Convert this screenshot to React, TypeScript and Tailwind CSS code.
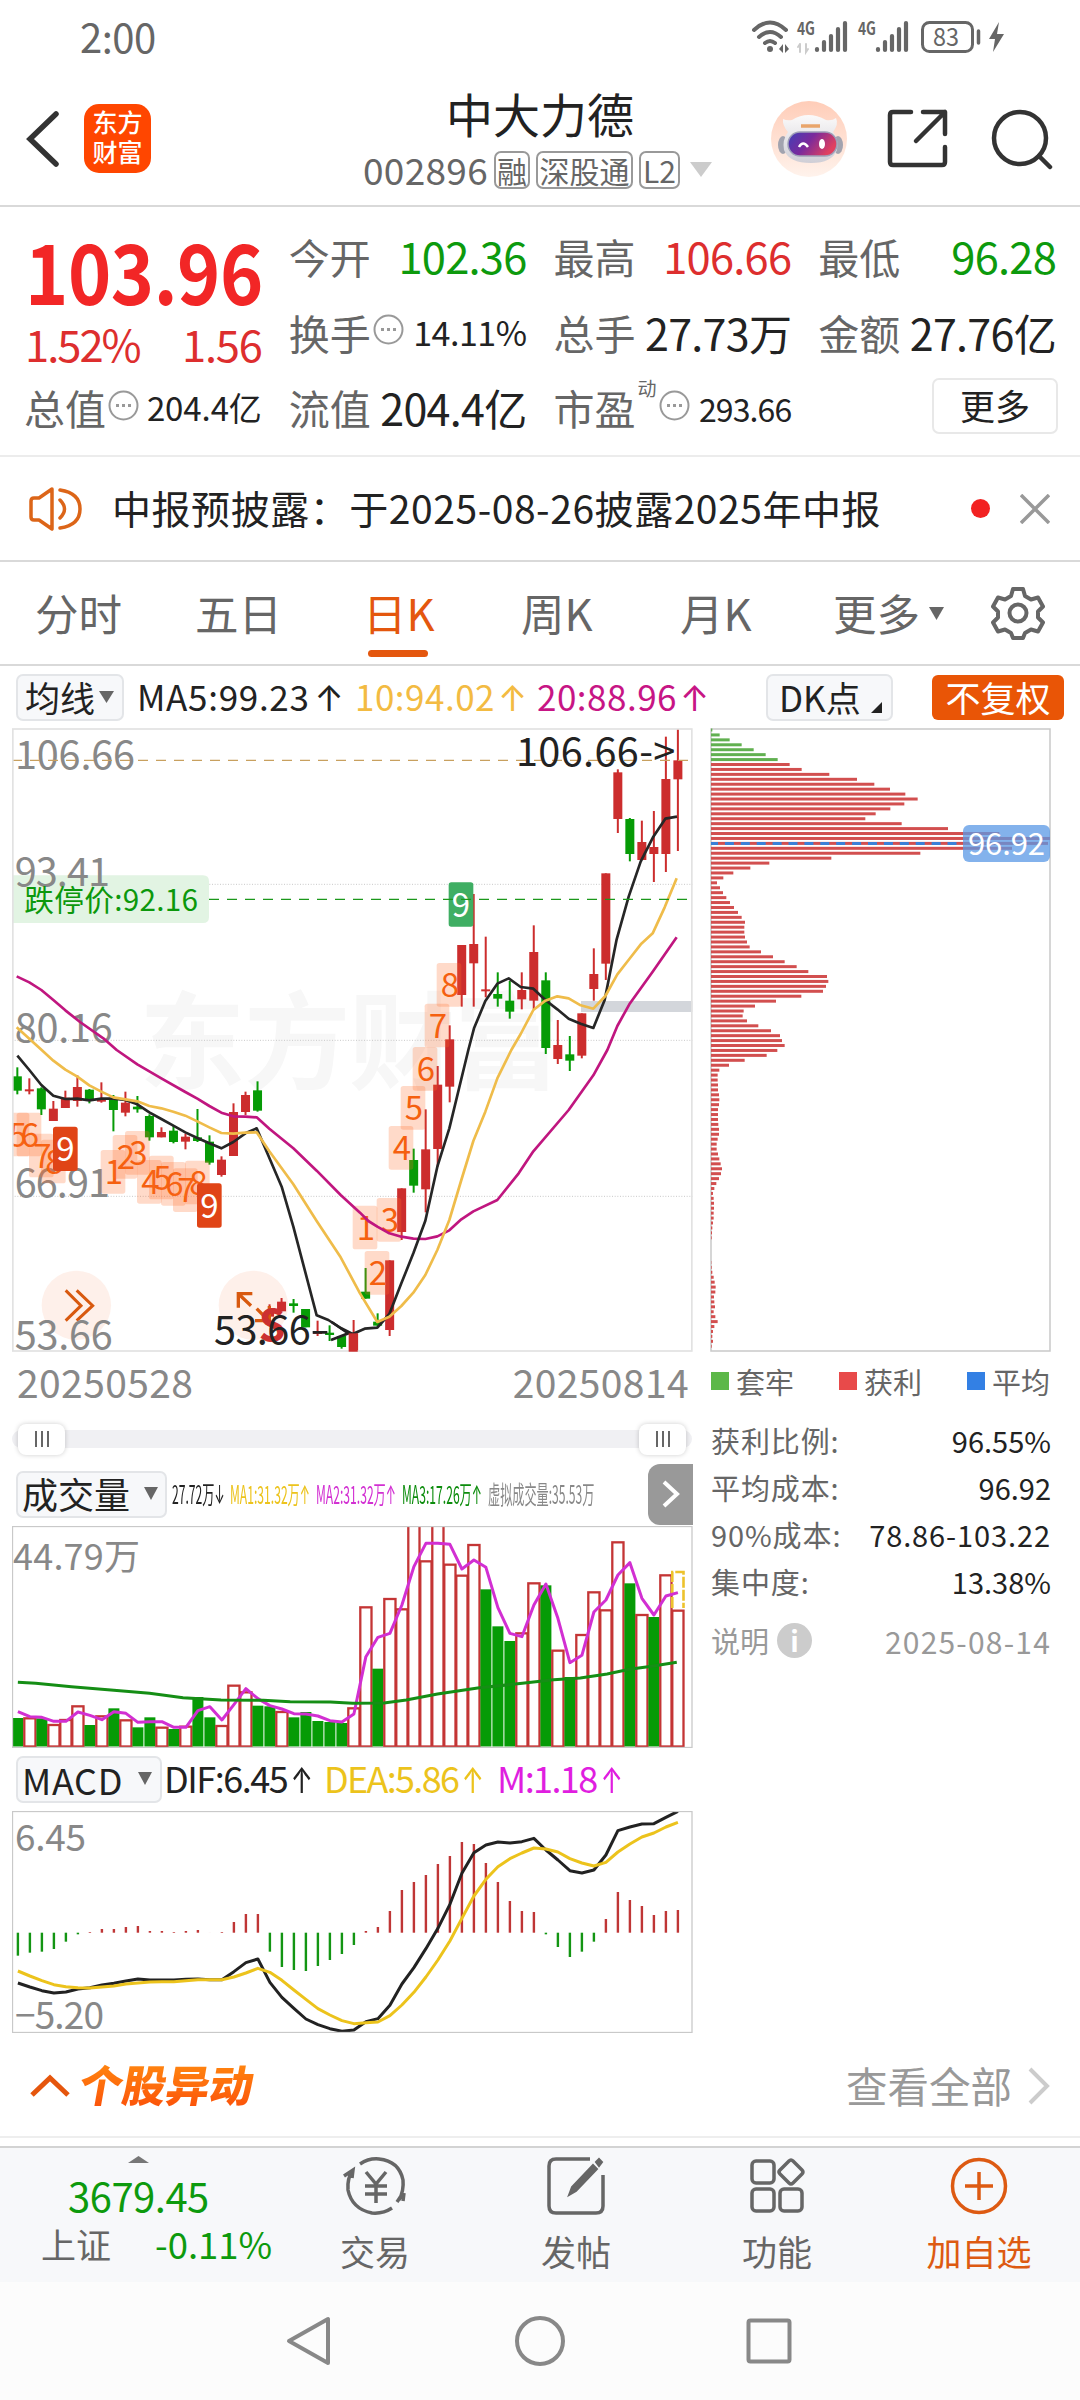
/**
 * @file App.tsx
 * @description Stock detail screen (daily K line).
 *
 * The page is a single column:
 * - **Header**: status bar, title bar, quote grid and notice line.
 * - **Charts**: candles, volume and MACD on the left, chip distribution on the right.
 * - **Footer**: index ticker, action tabs and the system navigation keys.
 */
import type { ReactNode } from 'react';

const R = '#cc2d2d';
const G = '#069b06';

// [direction, body top, body bottom, wick top, wick bottom], in chart units
type Candle = ['r' | 'g', number, number, number, number];

const CANDLES: Candle[] = [
  ['g', 1069, 1112, 1042, 1123], ['r', 1108, 1114, 1075, 1123], ['g', 1105, 1168, 1102, 1185], ['r', 1166, 1203, 1143, 1203],
  ['r', 1133, 1164, 1112, 1164], ['r', 1101, 1143, 1066, 1160], ['g', 1109, 1140, 1107, 1150], ['r', 1140, 1145, 1087, 1148],
  ['g', 1140, 1170, 1125, 1234], ['r', 1148, 1178, 1115, 1189], ['g', 1160, 1168, 1128, 1178], ['g', 1188, 1252, 1183, 1262],
  ['r', 1236, 1252, 1222, 1252], ['g', 1232, 1266, 1218, 1270], ['r', 1250, 1265, 1241, 1288], ['g', 1252, 1263, 1167, 1266],
  ['g', 1265, 1328, 1246, 1334], ['r', 1319, 1365, 1309, 1370], ['r', 1176, 1308, 1150, 1308], ['r', 1125, 1176, 1115, 1185],
  ['g', 1111, 1172, 1084, 1175], ['r', 1774, 1790, 1753, 1810], ['r', 1745, 1774, 1734, 1774], ['g', 1750, 1758, 1737, 1778],
  ['g', 1767, 1822, 1767, 1822], ['r', 1837, 1842, 1802, 1848], ['g', 1838, 1845, 1816, 1863], ['g', 1848, 1881, 1845, 1886],
  ['r', 1840, 1895, 1800, 1895], ['g', 1715, 1736, 1644, 1736], ['g', 1805, 1817, 1780, 1820], ['r', 1621, 1830, 1621, 1848],
  ['r', 1405, 1536, 1405, 1560], ['g', 1320, 1397, 1286, 1418], ['r', 1288, 1408, 1168, 1477], ['r', 1094, 1287, 1038, 1340],
  ['r', 958, 1100, 916, 1147], ['r', 675, 825, 675, 860], ['r', 672, 730, 522, 860], ['r', 808, 814, 650, 832],
  ['g', 822, 836, 757, 860], ['g', 842, 875, 783, 896], ['r', 810, 838, 757, 868], ['r', 696, 842, 616, 868],
  ['g', 781, 984, 757, 1002], ['r', 975, 1017, 900, 1032], ['g', 1003, 1022, 948, 1053], ['r', 880, 1007, 880, 1015],
  ['r', 762, 807, 685, 842], ['r', 460, 731, 460, 780], ['r', 157, 297, 148, 339], ['g', 297, 402, 294, 424],
  ['r', 366, 420, 302, 420], ['r', 381, 402, 273, 486], ['r', 177, 402, 50, 456], ['r', 121, 178, 27, 393],
];

const MA5 =
  '52,1007 88,1050 124,1095 160,1127 196,1137 232,1136 268,1141 304,1136 340,1136 376,1140 412,1153 448,1177 484,1197 520,1217 556,1237 592,1254 628,1270 664,1285 700,1266 736,1240 770,1225 845,1400 880,1520 950,1786 985,1800 1022,1824 1058,1842 1094,1826 1132,1823 1168,1782 1204,1690 1240,1600 1276,1502 1312,1340 1348,1225 1405,990 1422,925 1456,843 1492,791 1526,775 1562,801 1600,806 1636,840 1672,868 1706,896 1742,911 1780,924 1814,840 1850,658 1886,530 1922,425 1960,350 1996,296 2031,290';
const MA10 =
  '50,922 125,990 160,1022 196,1049 232,1070 268,1096 304,1115 340,1132 376,1138 412,1144 448,1158 484,1165 520,1175 556,1187 592,1204 628,1222 664,1239 700,1241 736,1238 770,1237 808,1294 880,1393 950,1503 1022,1612 1080,1720 1132,1806 1168,1790 1204,1758 1240,1718 1276,1665 1312,1590 1348,1500 1384,1380 1420,1263 1456,1175 1492,1075 1534,990 1562,942 1600,870 1636,842 1672,829 1706,835 1742,856 1780,866 1816,828 1852,763 1888,717 1924,671 1958,640 1994,562 2030,475';
const MA20 =
  '50,769 88,787 124,810 160,840 196,871 240,906 310,955 350,990 412,1033 484,1075 556,1116 592,1136 628,1158 664,1178 700,1189 736,1190 770,1192 808,1226 880,1285 950,1352 1022,1425 1080,1478 1105,1503 1132,1520 1168,1540 1204,1550 1240,1556 1276,1557 1312,1549 1348,1531 1384,1498 1420,1474 1492,1440 1556,1360 1600,1294 1706,1170 1780,1066 1822,990 1852,918 1888,853 1958,755 2030,652';

// [label, left, top] of the nine-turn markers
const TURNS: [string, number, number][] = [
  ['5', 14, 1178], ['6', 50, 1178], ['7', 87, 1241], ['8', 123, 1259],
  ['1', 302, 1290], ['2', 338, 1245], ['3', 375, 1233], ['4', 411, 1320], ['5', 447, 1307], ['6', 483, 1326], ['7', 519, 1345], ['8', 555, 1322],
  ['1', 1058, 1457], ['2', 1094, 1593], ['3', 1130, 1434], ['4', 1166, 1218], ['5', 1202, 1098], ['6', 1238, 981], ['7', 1274, 851], ['8', 1310, 729],
];

const NINES: [number, number, string][] = [[159, 1220, '#e04416'], [591, 1390, '#e04416'], [1346, 487, '#3fae63']];

const CHIPS = [
  4, 26, 56, 92, 128, 164, 200, 236, 272, 355, 438, 490, 537, 583, 620, 580, 538, 494, 463, 572, 711, 865, 1017, 1011, 903, 628, 361, 175, 118, 67, 37,
  18, 27, 36, 46, 57, 69, 81, 92, 102, 100, 100, 102, 108, 116, 150, 186, 221, 257, 292, 348, 352, 345, 336, 271, 195, 132, 98, 95, 108, 142, 180, 207,
  213, 221, 199, 167, 101, 54, 25, 20, 20, 21, 21, 24, 25, 24, 21, 21, 21, 22, 24, 24, 20, 17, 17, 21, 25, 29, 33, 30, 24, 16, 10, 6, 8, 9, 9, 8, 8, 6,
  4, 3, 2, 0, 0, 0, 0, 1, 2, 4, 8, 11, 14, 13, 9, 10, 12, 8, 13, 20, 10, 6, 4, 6, 2,
];

const VOLUMES =
  'g624 r622 g625 r642 r627 r586 g645 r616 g595 r628 g652 g622 r650 g657 r647 g561 g622 r645 r524 r544 g587 g589 r603 g622 g606 g633 g636 g639 r592 r289 g476 r264 r295 r40 r151 r40 r161 r194 r102 g238 g349 g393 r367 r217 g226 r419 g501 r372 r244 r298 r94 g220 r312 g321 r193 r299'.split(' ');
const VOL_MA = [
  605, 620, 622, 634, 634, 606, 616, 629, 605, 610, 637, 635, 635, 652, 652, 602, 590, 630, 584, 536, 566, 587, 597, 611, 612, 618, 632, 636, 612, 440, 382,
  370, 285, 170, 100, 100, 103, 177, 150, 172, 293, 370, 380, 285, 222, 325, 458, 436, 306, 270, 195, 158, 265, 315, 258, 248,
];
const VOL_MA3: [number, number][] = [
  [40, 517], [80, 520], [160, 530], [255, 541], [335, 550], [410, 563], [495, 570], [590, 571], [650, 575], [740, 576], [790, 580], [860, 579], [910, 570],
  [980, 552], [1070, 534], [1170, 520], [1240, 509], [1300, 504], [1360, 492], [1410, 478], [1460, 469], [1516, 457],
];

const MACD_BARS = [
  617, 608, 605, 597, 575, 553, 546, 537, 537, 531, 528, 543, 543, 546, 543, 540, 548, 546, 516, 492, 492, 605, 651, 660, 663, 648, 630, 612, 585, 543, 531,
  483, 420, 396, 375, 342, 318, 276, 282, 339, 396, 453, 483, 486, 553, 591, 621, 605, 575, 507, 426, 450, 468, 495, 483, 480,
];
const DIF = [
  699, 711, 722, 729, 726, 717, 713, 705, 700, 693, 687, 690, 690, 690, 688, 687, 689, 689, 665, 638, 627, 697, 742, 775, 807, 824, 836, 844, 840, 815, 806,
  766, 702, 653, 596, 535, 463, 370, 308, 285, 276, 279, 275, 265, 300, 330, 362, 369, 360, 315, 242, 231, 222, 221, 202, 184,
];
const DEA = [
  663, 678, 692, 704, 710, 713, 714, 711, 708, 702, 699, 696, 695, 695, 692, 689, 689, 689, 681, 669, 655, 667, 691, 720, 748, 776, 795, 812, 821, 818, 816,
  797, 765, 727, 681, 630, 573, 505, 438, 388, 350, 326, 309, 294, 297, 306, 326, 339, 348, 337, 306, 282, 261, 249, 231, 217,
];

const barX = (i: number) => 17.9 + i * 12;
const line = (values: number[], offset: number) => values.map((v, i) => `${barX(i)},${offset + v / 3}`).join(' ');

const Up = ({ className = '' }: { className?: string }) => <span className={`font-[Inter] ${className}`}>↑</span>;

const Caret = ({ className = '' }: { className?: string }) => (
  <svg className={`shrink-0 ${className}`} viewBox="0 0 10 8" preserveAspectRatio="none" fill="currentColor">
    <path d="M0 0h10L5 8z" />
  </svg>
);

const Dots = () => (
  <svg className="h-[31px] w-[31px] shrink-0" viewBox="0 0 31 31" fill="none" stroke="#999" strokeWidth="2">
    <circle cx="15.5" cy="15.5" r="14" />
    <path d="M8 15.5h3m3 0h3m3 0h3" strokeWidth="3" />
  </svg>
);

function StatusBar() {
  return (
    <div className="flex h-[72px] items-center pl-[80px] text-[#666]">
      <span className="w-[671px] text-[40px] tracking-[-0.500px]">2:00</span>
      <svg className="h-[44px] w-[256px]" viewBox="750 14 256 44" fill="none" stroke="#666" strokeLinecap="round">
        <g strokeWidth="4">
          <path d="M753 30q16-15 32 0M758 37q11-10 22 0M764 43q5-4 10 0" />
        </g>
        <circle cx="769" cy="49" r="3" fill="#666" stroke="none" />
        <path d="M778 49l4-5v9zM788 49l-4-5v9z" fill="#666" stroke="none" />
        <path d="M799 44v8M797 47l2-3M805 44v8l2-3" stroke="#ccc" strokeWidth="2" />
        <text x="796" y="35" fontSize="18" fontWeight="700" fill="#666" stroke="none" textLength="18" lengthAdjust="spacingAndGlyphs">4G</text>
        <path d="M816 49v1M823 42v8M830 36v14M837 29v21M844 23v27" strokeWidth="4.2" />
        <text x="857" y="35" fontSize="18" fontWeight="700" fill="#666" stroke="none" textLength="18" lengthAdjust="spacingAndGlyphs">4G</text>
        <path d="M877 49v1M884 42v8M891 36v14M898 29v21M905 23v27" strokeWidth="4.2" />
        <rect x="921.5" y="22.5" width="50" height="29" rx="7" strokeWidth="3" />
        <path d="M977.500 31v12" strokeWidth="3.500" />
        <text x="932" y="46" fontSize="25" fill="#666" stroke="none" textLength="26" lengthAdjust="spacingAndGlyphs">83</text>
        <path d="M998 22l-10 17h6l-2 13 11-18h-7z" fill="#666" stroke="none" />
      </svg>
    </div>
  );
}

function TitleBar() {
  const tag = 'flex h-[38px] items-center justify-center rounded-[7px] border-2 border-[#999] text-[30px]';
  return (
    <header className="flex h-[135px] items-center border-b-2 border-[#d9d9d9] text-[#666]">
      <svg className="ml-[26px] h-[56px] w-[34px]" viewBox="0 0 34 56" fill="none" stroke="#333" strokeWidth="5.500" strokeLinecap="round">
        <path d="M30 3L4 28l26 25" />
      </svg>
      <div className="ml-[24px] flex h-[69px] w-[67px] flex-col items-center justify-center gap-[5px] rounded-[15px] bg-[#ff4600] pb-[4px] text-[25px] font-medium text-white">
        <span>东方</span>
        <span>财富</span>
      </div>
      <div className="ml-[212px] flex w-[351px] flex-col">
        <h1 className="ml-[83px] text-[47px] text-[#222]">中大力德</h1>
        <div className="mt-[15px] flex items-center">
          <span className="w-[131px] text-[37px] tracking-[0.300px]">002896</span>
          <span className={`${tag} w-[36px]`}>融</span>
          <span className={`${tag} ml-[6px] w-[97px]`}>深股通</span>
          <span className={`${tag} ml-[6px] w-[41px]`}>L2</span>
          <Caret className="ml-[10px] h-[15px] w-[22px] text-[#ccc]" />
        </div>
      </div>
      <svg className="ml-[57px] h-[76px] w-[76px]" viewBox="0 0 76 76">
        <defs>
          <linearGradient id="halo" x1="0" y1="0" x2="0" y2="1">
            <stop offset="0" stopColor="#ffcdb8" />
            <stop offset="1" stopColor="#fff3ec" />
          </linearGradient>
          <linearGradient id="shell" x1="0" y1="0" x2="0" y2="1">
            <stop offset="0" stopColor="#fbfafa" />
            <stop offset="1" stopColor="#cfced6" />
          </linearGradient>
          <linearGradient id="visor" x1="0" y1="0" x2="1" y2="0.4">
            <stop offset="0" stopColor="#4040b8" />
            <stop offset="0.5" stopColor="#7a2a9c" />
            <stop offset="1" stopColor="#e04060" />
          </linearGradient>
        </defs>
        <circle cx="38" cy="38" r="38" fill="url(#halo)" />
        <ellipse cx="12" cy="44" rx="5" ry="9" fill="#a2a3af" />
        <ellipse cx="67" cy="44" rx="5" ry="9" fill="#a2a3af" />
        <path d="M12 18q4 2 9 1 16-10 34 0 6 1 10-2 3 6-3 14 6 8 4 18-5 13-26 13-22 0-27-13-2-10 4-18-6-7-5-13z" fill="url(#shell)" />
        <rect x="17" y="31" width="49" height="24" rx="12" fill="url(#visor)" stroke="#9fa0b8" strokeWidth="1.500" />
        <path d="M28 46q4-7 9 0" fill="none" stroke="#fff" strokeWidth="2.500" />
        <ellipse cx="51" cy="43" rx="3" ry="5" fill="#fff" />
        <path d="M30 25h19" stroke="#e9a56b" strokeWidth="3.500" />
      </svg>
      <svg className="ml-[40px] h-[62px] w-[62px]" viewBox="0 0 62 62" fill="none" stroke="#333" strokeWidth="4.500" strokeLinecap="round" strokeLinejoin="round">
        <path d="M24 4H6q-3 0-3 3v47q0 3 3 3h49q3 0 3-3V39M36 4h22v22M58 4L29 33" />
      </svg>
      <svg className="ml-[42px] h-[62px] w-[64px]" viewBox="0 0 64 62" fill="none" stroke="#333" strokeWidth="4.500" strokeLinecap="round">
        <circle cx="29" cy="30" r="26" />
        <path d="M48 48l11 11" />
      </svg>
    </header>
  );
}

function Cell({ label, children, mark }: { label: string; children: ReactNode; mark?: ReactNode }) {
  return (
    <div className="flex items-center justify-between">
      <div className="flex items-center text-[41px] text-[#666]">
        {label}
        {mark}
      </div>
      {children}
    </div>
  );
}

function Quote() {
  const num = 'text-[43.5px] tracking-[-0.8px]';
  const mid = 'text-[43px] tracking-[-0.7px] text-[#222]';
  return (
    <section className="grid h-[250px] grid-cols-4 grid-rows-[76px_76px_75px] gap-x-[27px] border-b-2 border-[#ececec] pt-[11px] pr-[24px] pl-[24px]">
      <div className="row-span-2 flex flex-col text-[#dd2e2e]">
        <span className="mt-[4px] ml-[1px] h-[95px] w-[230px] origin-left scale-x-[0.885] text-[83px] leading-[95px] font-bold tracking-[-0.500px] text-[#f22626]">103.96</span>
        <span className="mt-[5px] ml-[1px] flex justify-between text-[43.5px] tracking-[-2px]">
          <span>1.52%</span>
          <span className="tracking-[-1.200px]">1.56</span>
        </span>
      </div>
      <Cell label="今开"><span className={`${num} text-[#0d9a0d]`}>102.36</span></Cell>
      <Cell label="最高"><span className={`${num} text-[#dd2e2e]`}>106.66</span></Cell>
      <Cell label="最低"><span className={`${num} text-[#0d9a0d]`}>96.28</span></Cell>
      <Cell label="换手" mark={<span className="ml-[2px] -mt-[5px]"><Dots /></span>}>
        <span className="text-[34px] tracking-[-0.500px] text-[#222]">14.11%</span>
      </Cell>
      <Cell label="总手"><span className={mid}>27.73万</span></Cell>
      <Cell label="金额"><span className={mid}>27.76亿</span></Cell>
      <Cell label="总值" mark={<span className="ml-[2px] -mt-[5px]"><Dots /></span>}>
        <span className="text-[33px] tracking-[-0.100px] text-[#222]">204.4亿</span>
      </Cell>
      <Cell label="流值"><span className={mid}>204.4亿</span></Cell>
      <Cell
        label="市盈"
        mark={
          <span className="-mt-[5px] flex">
            <span className="-mt-[12px] ml-[2px] text-[19px]">动</span>
            <span className="ml-[2px]"><Dots /></span>
          </span>
        }
      >
        <span className="text-[32px] tracking-[-0.900px] text-[#222]">293.66</span>
      </Cell>
      <button className="-mt-[4px] mr-[-2px] flex h-[56px] w-[126px] items-center justify-center self-center justify-self-end rounded-[7px] border-2 border-[#e8e8e8] pb-[3px] text-[35px] text-[#222]">更多</button>
    </section>
  );
}

function Notice() {
  return (
    <div className="flex h-[105px] items-center border-b-2 border-[#d9d9d9] pl-[29px] text-[39px]">
      <svg className="h-[46px] w-[53px]" viewBox="0 0 53 46" fill="none" stroke="#dc6518" strokeWidth="3.500" strokeLinejoin="round" strokeLinecap="round">
        <path d="M23 3L10 12H5q-3 0-3 3v16q0 3 3 3h5l13 9zM31 14q9 9 0 18M31 4q20 3 20 19T31 42" />
      </svg>
      <span className="ml-[30px] w-[859px] pb-[2px] tracking-[0.550px] text-[#222]">中报预披露：于2025-08-26披露2025年中报</span>
      <span className="h-[19px] w-[19px] rounded-full bg-[#f22222]" />
      <svg className="ml-[30px] h-[30px] w-[30px]" viewBox="0 0 30 30" stroke="#999" strokeWidth="3.500">
        <path d="M1 1l28 28M29 1L1 29" />
      </svg>
    </div>
  );
}

function Tabs() {
  return (
    <nav className="flex h-[104px] items-center border-b-2 border-[#d9d9d9] pl-[35px] text-[43.5px] text-[#666]">
      <span className="w-[160px]">分时</span>
      <span className="w-[168px]">五日</span>
      <span className="relative w-[158px] text-[#e4570e]">
        日K
        <i className="absolute top-[59px] left-[5px] h-[7px] w-[60px] rounded-full bg-[#e4570e]" />
      </span>
      <span className="w-[159px]">周K</span>
      <span className="w-[153px]">月K</span>
      <span>更多</span>
      <Caret className="ml-[9px] h-[13px] w-[15px]" />
      <svg className="ml-[47px] h-[54px] w-[54px]" viewBox="0 0 54 54" fill="none" stroke="#666" strokeWidth="4" strokeLinejoin="round">
        <path d="M22 3h10l2 7 6 3.500 7-2 5 9-5 5v6l5 5-5 9-7-2-6 3.500-2 5H22l-2-5-6-3.500-7 2-5-9 5-5v-6l-5-5 5-9 7 2 6-3.500z" />
        <circle cx="27" cy="27" r="8.500" />
      </svg>
    </nav>
  );
}

function MaBar() {
  return (
    <div className="flex h-[62px] items-center pt-[1px] pl-[16px] text-[35px] text-[#222]">
      <span className="flex h-[47px] w-[108px] items-center rounded-[7px] border-2 border-[#e3e5e8] bg-[#f7f8fa] pb-[2px] pl-[7px]">
        均线
        <Caret className="ml-[4px] h-[12px] w-[15px] text-[#666]" />
      </span>
      <span className="ml-[13px] w-[218px] pb-[2px] tracking-[0.700px]">MA5:99.23<Up className="ml-[5px]" /></span>
      <span className="w-[182px] pb-[2px] tracking-[0.500px] text-[#f3bb42]">10:94.02<Up className="ml-[3px]" /></span>
      <span className="w-[229px] pb-[2px] tracking-[0.500px] text-[#c71585]">20:88.96<Up className="ml-[3px]" /></span>
      <span className="flex h-[47px] w-[127px] items-center rounded-[7px] border-2 border-[#e3e5e8] bg-[#f7f8fa] pb-[2px] pl-[11px]">
        DK点
        <svg className="mt-[22px] ml-[10px] h-[11px] w-[11px]" viewBox="0 0 10 10"><path d="M10 0v10H0z" fill="#222" /></svg>
      </span>
      <span className="ml-[39px] flex h-[45px] w-[132px] items-center justify-center rounded-[6px] bg-[#e95506] pb-[2px] text-white">不复权</span>
    </div>
  );
}

// Units are a third of a pixel
function PriceChart() {
  return (
    <svg className="h-[624px] w-[681px]" viewBox="36 24 2043 1872">
      <text x="418" y="1083" fontSize="318" fontWeight="700" fill="#f7f7f7" textLength="1262">东方财富</text>
      <path d="M36 493H2077M36 961H2077M36 1429H2077" stroke="#c8c8c8" strokeWidth="3" strokeDasharray="3 5" />
      <rect x="1743" y="843" width="334" height="33" fill="#d3d6db" />
      <path d="M36 466H609q18 0 18 18V591q0 18-18 18H36z" fill="#e2f4e3" />
      <g fill="#888" fontSize="119">
        <text x="45" y="147" textLength="360">106.66</text>
        <text x="44" y="498" textLength="286">93.41</text>
        <text x="44" y="966" textLength="294">80.16</text>
        <text x="44" y="1430" textLength="286">66.91</text>
      </g>
      <text x="73" y="572" fontSize="89" fill="#0c980c" textLength="521">跌停价:92.16</text>
      <circle cx="229" cy="1756" r="104" fill="#fef0ea" />
      <circle cx="760" cy="1756" r="104" fill="#fef0ea" />
      {CANDLES.map(([dir, top, bottom, high, low], i) => (
        <g key={i} fill={dir === 'r' ? R : G}>
          <rect x={49 + i * 36.03} y={high} width="6" height={low - high} />
          <rect x={38.5 + i * 36.03} y={top} width="27" height={bottom - top} />
        </g>
      ))}
      {TURNS.map(([label, x, y], i) => (
        <g key={i}>
          <rect x={x} y={y} width="74" height="131" rx="8" fill="#ff6a28" fillOpacity="0.25" />
          <text x={x + 40} y={y + 102} fontSize="99" fill="#f5600f" textAnchor="middle">{label}</text>
        </g>
      ))}
      <g fill="none" strokeLinejoin="round" strokeWidth="8">
        <polyline points={MA20} stroke="#c0167f" />
        <polyline points={MA5} stroke="#262626" />
        <polyline points={MA10} stroke="#efbc4a" />
      </g>
      {NINES.map(([x, y, fill]) => (
        <g key={x}>
          <rect x={x} y={y} width="74" height="133" rx="8" fill={fill} />
          <text x={x + 37} y={y + 103} fontSize="99" fill="#fff" textAnchor="middle">9</text>
        </g>
      ))}
      <path d="M36 121H2065" stroke="#c8a05f" strokeWidth="4" strokeDasharray="30 24" />
      <path d="M627 538H2065" stroke="#1b981b" strokeWidth="4" strokeDasharray="30 24" />
      <text x="1548" y="137" fontSize="119" fill="#222" textLength="478">106.66-&gt;</text>
      <g fill="none" stroke="#d8590f" strokeWidth="9">
        <path d="M197 1711l46 46-46 45M230 1711l48 46-48 45" />
        <path d="M757 1721H715v42M715 1721l38 36M770 1766l37 37M765 1802h43v-44" strokeWidth="10" />
      </g>
      <text x="776" y="1864" fontSize="128" fontWeight="700" fill="#cc3030">S</text>
      <text x="44" y="1886" fontSize="119" fill="#888" textLength="294">53.66</text>
      <text x="642" y="1872" fontSize="119" fill="#222" textLength="290">53.66</text>
      <path d="M938 1837h44M995 1806l50 34-52 20" stroke="#222" strokeWidth="8" fill="none" />
      <rect x="38.500" y="27" width="2037" height="1866" fill="none" stroke="#e2e2e2" strokeWidth="5" />
      <rect x="1046" y="1840" width="27" height="55" fill={R} />
    </svg>
  );
}

function ChipChart() {
  return (
    <svg className="h-[624px] w-[342px]" viewBox="710 728 342 624">
      <rect x="711" y="729" width="339" height="622" fill="none" stroke="#c9c9c9" strokeWidth="1.500" />
      {CHIPS.map((w, i) => (
        <rect key={i} x="711" y={728.5 + i * 4.93} width={w / 3} height="3" fill={i < 7 ? '#61b050' : '#d24f4f'} />
      ))}
      <path d="M711 843.4H963" stroke="#3a80d8" strokeWidth="3" strokeDasharray="9 6.900" strokeDashoffset="2" />
      <rect x="963" y="825" width="87" height="37" rx="6" fill="#5a98e6" fillOpacity="0.75" />
      <text x="968" y="855" fontSize="31" fill="#fff" textLength="77">96.92</text>
    </svg>
  );
}

function VolumeChart() {
  return (
    <svg className="h-[222px] w-[681px]" viewBox="12 1526 681 222">
      <text x="13" y="1570" fontSize="36" fill="#888" textLength="127">44.79万</text>
      {VOLUMES.map((item, i) => {
        const top = 1510 + Number(item.slice(1)) / 3;
        return item[0] === 'g' ? (
          <rect key={i} x={barX(i) - 5.5} y={top} width="11" height={1746.5 - top} fill={G} />
        ) : (
          <rect key={i} x={barX(i) - 5.6} y={top + 1} width="11.200" height={1745.5 - top} fill="#fff" stroke="#c43535" strokeWidth="2.300" />
        );
      })}
      <path d="M672.300 1608V1572H683.500V1608" fill="none" stroke="#edc22c" strokeWidth="2.600" strokeDasharray="11 2" />
      <polyline points={line(VOL_MA, 1510)} fill="none" stroke="#d22fd2" strokeWidth="3" strokeLinejoin="round" />
      <polyline points={VOL_MA3.map(([x, y]) => `${x / 2.24},${1510 + y / 3}`).join(' ')} fill="none" stroke="#158e15" strokeWidth="3" />
      <rect x="12.500" y="1526.500" width="679.500" height="221" fill="none" stroke="#c9c9c9" strokeWidth="1.300" />
    </svg>
  );
}

function MacdChart() {
  const zero = 1932.7;
  return (
    <svg className="h-[222px] w-[681px]" viewBox="12 1811 681 222">
      <text x="15" y="1851" fontSize="37" fill="#888" textLength="71">6.45</text>
      <text x="15" y="2029" fontSize="37" fill="#888" textLength="89">−5.20</text>
      {MACD_BARS.map((v, i) => {
        const tip = 1750 + v / 3;
        return <rect key={i} x={barX(i) - 1.2} y={Math.min(tip, zero)} width="2.400" height={Math.abs(tip - zero)} fill={v > 548 ? '#139513' : '#bf3636'} />;
      })}
      <polyline points={line(DIF, 1750)} fill="none" stroke="#222" strokeWidth="3" strokeLinejoin="round" />
      <polyline points={line(DEA, 1750)} fill="none" stroke="#ecc31c" strokeWidth="3" strokeLinejoin="round" />
      <rect x="12.500" y="1811.500" width="679.500" height="221" fill="none" stroke="#c9c9c9" strokeWidth="1.300" />
    </svg>
  );
}

const Handle = () => (
  <span className="flex h-[31px] w-[47px] items-center justify-center gap-[4px] rounded-[8px] bg-white shadow-[0_0_5px_rgba(0,0,0,0.2)]">
    <i className="h-[16px] w-[2px] bg-[#666]" />
    <i className="h-[16px] w-[2px] bg-[#666]" />
    <i className="h-[16px] w-[2px] bg-[#666]" />
  </span>
);

function Squeezed({ className, children }: { className: string; children: ReactNode }) {
  return (
    <span className={`shrink-0 ${className}`}>
      <span className="inline-block origin-left scale-x-[0.485]">{children}</span>
    </span>
  );
}

function Charts() {
  return (
    <div className="flex w-[693px] flex-col pl-[12px]">
      <PriceChart />
      <div className="flex h-[64px] items-center justify-between pr-[4px] pb-[5px] pl-[5px] text-[39px] tracking-[0.400px] text-[#888]">
        <span>20250528</span>
        <span>20250814</span>
      </div>
      <div className="flex h-[46px] items-center">
        <div className="flex h-[18px] w-[680px] items-center justify-between rounded-full bg-[#f0f0f3] px-[6px]">
          <Handle />
          <Handle />
        </div>
      </div>
      <div className="flex h-[64px] items-center">
        <span className="ml-[4px] flex h-[47px] w-[151px] shrink-0 items-center rounded-[7px] border-2 border-[#e3e5e8] bg-[#f7f8fa] pb-[2px] pl-[4px] text-[36px] text-[#222]">
          成交量
          <Caret className="ml-[14px] h-[13px] w-[14px] text-[#666]" />
        </span>
        <div className="ml-[5px] flex w-[476px] text-[25px]">
          <Squeezed className="w-[58px] text-[#222]">27.72万<span className="font-[Inter]">↓</span></Squeezed>
          <Squeezed className="w-[86px] text-[#ecc31c]">MA1:31.32万<Up /></Squeezed>
          <Squeezed className="w-[86px] text-[#d22fd2]">MA2:31.32万<Up /></Squeezed>
          <Squeezed className="w-[86px] text-[#0c8c0c]">MA3:17.26万<Up /></Squeezed>
          <Squeezed className="w-[110px] text-[#888]">虚拟成交量:35.53万</Squeezed>
        </div>
        <span className="flex h-[61px] w-[45px] shrink-0 items-center justify-center rounded-l-[12px] bg-[#999]">
          <svg className="h-[28px] w-[18px]" viewBox="0 0 18 28" fill="none" stroke="#fff" strokeWidth="4"><path d="M2 2l13 12L2 26" /></svg>
        </span>
      </div>
      <VolumeChart />
      <div className="flex h-[63px] items-center text-[36px]">
        <span className="ml-[4px] flex h-[47px] w-[146px] items-center rounded-[7px] border-2 border-[#e3e5e8] bg-[#f7f8fa] pb-[2px] pl-[4px] text-[#222]">
          <span className="w-[116px] tracking-[0.700px]">MACD</span>
          <Caret className="h-[13px] w-[14px] text-[#666]" />
        </span>
        <span className="ml-[2px] w-[160px] pb-[2px] tracking-[-1.500px] text-[#222]">DIF:6.45<Up className="inline-block scale-x-75" /></span>
        <span className="w-[173px] pb-[2px] tracking-[-1.700px] text-[#ecc31c]">DEA:5.86<Up className="inline-block scale-x-75" /></span>
        <span className="pb-[2px] tracking-[-1.600px] text-[#e01ee0]">M:1.18<Up className="inline-block scale-x-75" /></span>
      </div>
      <MacdChart />
    </div>
  );
}

const STATS = [
  ['获利比例:', '96.55%'],
  ['平均成本:', '96.92'],
  ['90%成本:', '78.86-103.22'],
  ['集中度:', '13.38%'],
];

function ChipPanel() {
  return (
    <div className="ml-[17px] flex w-[342px] flex-col text-[29px] text-[#666]">
      <ChipChart />
      <div className="flex h-[60px] w-[340px] items-center justify-between pb-[2px] pl-[1px]">
        {[['套牢', 'bg-[#5cb848]'], ['获利', 'bg-[#e84a4a]'], ['平均', 'bg-[#3380e4]']].map(([name, color]) => (
          <span key={name} className="flex items-center gap-[7px]">
            <i className={`h-[18px] w-[18px] ${color}`} />
            {name}
          </span>
        ))}
      </div>
      <div className="mt-[5px] w-[341px] pl-[1px]">
        {STATS.map(([name, value]) => (
          <div key={name} className="flex h-[47px] items-center justify-between">
            <span className="tracking-[0.900px]">{name}</span>
            <span className={`text-[#222] ${value.length > 8 ? 'tracking-[0.900px]' : ''}`}>{value}</span>
          </div>
        ))}
        <div className="mt-[12px] flex h-[47px] items-center text-[#999]">
          说明
          <span className="ml-[8px] flex h-[35px] w-[35px] items-center justify-center rounded-full bg-[#ccc] pb-[2px] text-[28px] font-bold text-white">i</span>
          <span className="ml-auto text-[30px] tracking-[1.200px]">2025-08-14</span>
        </div>
      </div>
    </div>
  );
}

function Action({ name, className, children }: { name: string; className: string; children: ReactNode }) {
  return (
    <div className={`flex flex-col items-center pt-[8px] ${className}`}>
      <svg className="h-[60px] w-[66px]" viewBox="0 0 66 60" fill="none" stroke="currentColor" strokeWidth="3.500">
        {children}
      </svg>
      <span className="mt-[17px] text-[35px]">{name}</span>
    </div>
  );
}

function Footer() {
  return (
    <>
      <section className="flex h-[98px] items-center border-b-2 border-[#eee] pb-[5px]">
        <svg className="ml-[30px] h-[24px] w-[40px]" viewBox="0 0 40 24" fill="none" stroke="#e5560d" strokeWidth="5"><path d="M2 21L20 4l18 17" /></svg>
        <h2 className="-mt-[4px] ml-[10px] w-[766px] -skew-x-10 bg-linear-to-b from-[#ff8a10] to-[#fb4f0a] bg-clip-text py-1 text-[43.500px] font-black text-transparent">个股异动</h2>
        <span className="text-[41.500px] text-[#999]">查看全部</span>
        <svg className="ml-[16px] h-[38px] w-[22px]" viewBox="0 0 22 38" fill="none" stroke="#ccc" strokeWidth="4"><path d="M2 2l17 17L2 36" /></svg>
      </section>
      <div className="mt-[8px] flex h-[136px] border-t-2 border-[#d3d3d3] bg-[#f7f8fa] text-[#666]">
        <div className="flex w-[290px] flex-col">
          <svg className="mt-[8px] ml-[128px] h-[7px] w-[21px]" viewBox="0 0 21 7"><path d="M0 7h21L10.500 0z" fill="#777" /></svg>
          <span className="mt-[12px] ml-[68px] text-[40px] tracking-[-0.500px] text-[#0d9a0d]">3679.45</span>
          <span className="mt-[11px] ml-[41px] flex text-[35px]">
            上证
            <span className="ml-[44px] text-[36.500px] text-[#0d9a0d]">-0.11%</span>
          </span>
        </div>
        <Action name="交易" className="w-[170px]">
          <path d="M18 8q9-6 19-5 20 2 24 21 1 11-4 20M61 45l1-8M61 37l-6 9M50 52q-9 6-20 5Q10 53 6 34q-1-12 5-20M2 20l9-6-1 8" />
          <path d="M24 16l10 12 10-12M34 28v19M23 30h22M23 38h22" />
        </Action>
        <Action name="发帖" className="ml-[31px] w-[170px]">
          <path d="M47 3H13q-7 0-7 7v40q0 7 7 7h40q7 0 7-7V19" />
          <path d="M26 39l3-8L50 9l4 4-21 22zM53 6l3-3 3 3-3 4z" fill="currentColor" strokeWidth="2" />
        </Action>
        <Action name="功能" className="ml-[31px] w-[170px]">
          <rect x="8" y="5" width="22" height="22" rx="4" />
          <path d="M45 5q2-2 4 0l9 9q2 2 0 4l-9 9q-2 2-4 0l-9-9q-2-2 0-4z" />
          <rect x="8" y="33" width="22" height="22" rx="4" />
          <rect x="36" y="33" width="22" height="22" rx="4" />
        </Action>
        <Action name="加自选" className="ml-[32px] w-[170px] text-[#dd5a12]">
          <circle cx="33" cy="30" r="26.500" />
          <path d="M33 16v28M19 30h28" />
        </Action>
      </div>
      <div className="flex h-[118px] items-center bg-[#fcfcfc] pl-[286px]">
        <svg className="h-[54px] w-[508px]" viewBox="286 2314 508 54" fill="none" stroke="#888" strokeWidth="4" strokeLinejoin="round">
          <path d="M328 2319v44l-39-22z" />
          <circle cx="540" cy="2341" r="23" />
          <rect x="748.500" y="2320.500" width="41" height="41" rx="2" />
        </svg>
      </div>
    </>
  );
}

export default function App() {
  return (
    <div className="flex h-[2400px] w-[1080px] flex-col overflow-hidden bg-white font-['Noto_Sans_CJK_SC',sans-serif] leading-none whitespace-nowrap">
      <StatusBar />
      <TitleBar />
      <Quote />
      <Notice />
      <Tabs />
      <MaBar />
      <main className="flex h-[1312px]">
        <Charts />
        <ChipPanel />
      </main>
      <Footer />
    </div>
  );
}
